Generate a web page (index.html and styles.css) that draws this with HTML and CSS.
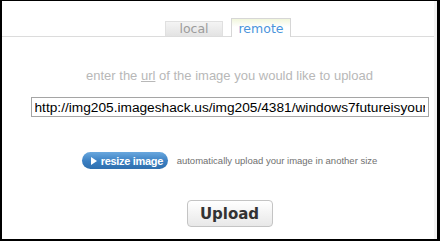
FILE: index.html
```html
<!DOCTYPE html>
<html lang="en">
<head>
    <meta charset="UTF-8">
    <title>Upload image</title>
    <link rel="stylesheet" href="styles.css">
</head>
<body>

    <div class="frame">
        <!-- Source tabs -->
        <div class="tabs">
            <div class="tab">local</div>
            <div class="tab active">remote</div>
        </div>

        <div class="content">
            <p class="prompt">enter the <span class="abbr">url</span> of the image you would like to upload</p>

            <input class="url" type="text" value="http://img205.imageshack.us/img205/4381/windows7futureisyourpc.jpg">

            <!-- Resize option -->
            <div class="resize-row">
                <span class="resize-btn">
                    <svg width="6" height="8" viewBox="0 0 6 8"><path d="M0 0 L6 4 L0 8 Z" fill="#fff"/></svg>
                    resize image
                </span>
                <span class="resize-note">automatically upload your image in another size</span>
            </div>

            <button class="upload">Upload</button>
        </div>
    </div>

</body>
</html>
```

FILE: styles.css
```css
/* Page reset */
body {
    margin: 0;
    background-color: #fff;
    font-family: "Liberation Sans", Arial, sans-serif;
}

/* Outer frame with dark edges */
.frame {
    width: 440px;
    height: 241px;
    box-sizing: border-box;
    border-top: 1px solid #000;
    border-left: 2px solid #000;
    border-right: 3px solid #000;
    border-bottom: 2px solid #000;
    box-shadow: inset -3px 0 0 #f2f2f2;
    overflow: hidden;
}

/* Tab strip */
.tabs {
    display: flex;
    justify-content: center;
    align-items: flex-end;
    gap: 8px;
    height: 35px;
    padding-left: 20px;
    margin-right: 3px;
    border-bottom: 1px solid #dcdcdc;
}

.tab {
    width: 58px;
    height: 15px;
    box-sizing: border-box;
    border: 1px solid #e0e0e0;
    border-bottom: none;
    background: linear-gradient(#f4f4f4, #e3e3e3);
    color: #9c9c9c;
    font-family: "DejaVu Sans", Verdana, sans-serif;
    font-size: 12.5px;
    line-height: 14px;
    text-align: center;
}

.tab.active {
    width: 60px;
    height: 19px;
    margin-bottom: -1px;
    border: 1px solid #d6d6d6;
    border-bottom: none;
    background: linear-gradient(#f1f6dc, #fff 8px);
    color: #4a94db;
    line-height: 20px;
}

/* Main form area */
.content {
    display: flex;
    flex-direction: column;
    align-items: center;
    padding-left: 20px;
}

.prompt {
    margin: 31px 0 0;
    color: #b8b8b8;
    font-size: 13px;
    line-height: 16px;
}

.abbr {
    text-decoration: underline;
}

.url {
    width: 398px;
    height: 20px;
    box-sizing: border-box;
    margin: 13px 0 0;
    padding: 0 3px;
    border: 1px solid #a5a5a5;
    font-family: "Liberation Sans", Arial, sans-serif;
    font-size: 13.7px;
    color: #000;
}

/* Resize row */
.resize-row {
    display: flex;
    align-items: center;
    gap: 9px;
    margin-top: 35px;
}

.resize-btn {
    display: flex;
    align-items: center;
    gap: 4px;
    flex: none;
    width: 86px;
    height: 17px;
    box-sizing: border-box;
    padding-left: 9px;
    border-radius: 9px;
    background: linear-gradient(#6aa8de, #3a7fc2 55%, #2f6fae);
    color: #fff;
    font-weight: bold;
    font-size: 11px;
    letter-spacing: -0.3px;
    white-space: nowrap;
}

.resize-note {
    color: #707070;
    font-size: 9.5px;
    white-space: nowrap;
}

/* Upload button */
.upload {
    width: 86px;
    height: 27px;
    margin-top: 31px;
    border: 1px solid #c4c4c4;
    border-radius: 4px;
    background: linear-gradient(#fff, #e8e8e8);
    color: #333;
    font-family: "DejaVu Sans", Verdana, sans-serif;
    font-weight: bold;
    font-size: 15px;
    padding: 0;
}
```
